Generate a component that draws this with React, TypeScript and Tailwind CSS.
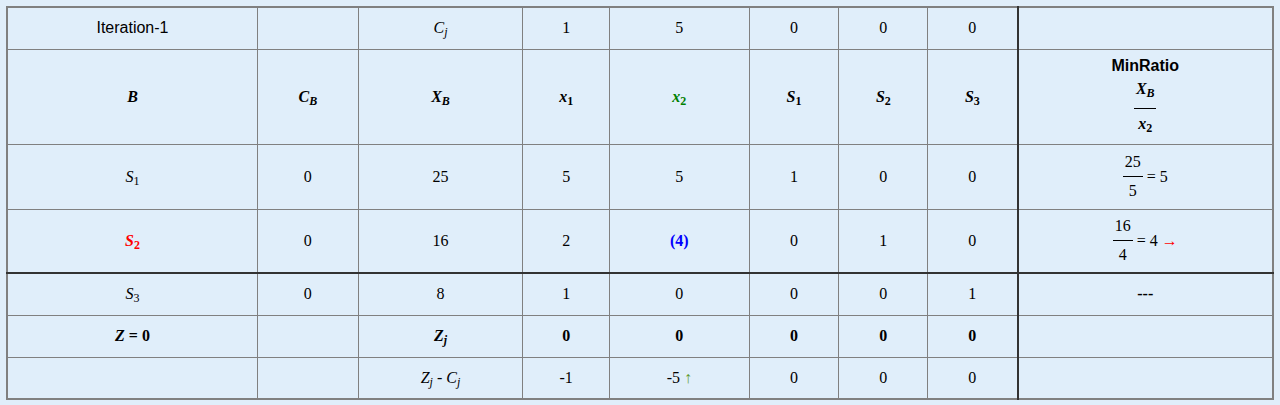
import React from 'react';

const serif = "font-['Times_New_Roman','Liberation_Serif',serif]";
const sans = "font-['Liberation_Sans',Arial,sans-serif]";

const cell = `border border-[#808080] text-center align-middle p-0 text-[16px] text-black ${serif}`;
const ratio = 'border-l-2 border-l-[#333333]';
const pivotRow = 'border-b-2 border-b-[#333333]';

const Sym: React.FC<{ b: string; s: string; bold?: boolean; subItalic?: boolean; color?: string }> = ({
  b,
  s,
  bold,
  subItalic,
  color,
}) => (
  <span className={`${serif} italic ${bold ? 'font-bold' : ''} ${color ?? ''}`}>
    {b}
    <sub className={`text-[12px] ${subItalic ? 'italic' : 'not-italic'}`}>{s}</sub>
  </span>
);

const Frac: React.FC<{
  top: React.ReactNode;
  bottom: React.ReactNode;
  w?: string;
  topCls?: string;
  botCls?: string;
}> = ({ top, bottom, w = 'w-[20px]', topCls = 'leading-[28px]', botCls = 'leading-[28px]' }) => (
  <span className="inline-flex flex-col items-center align-middle">
    <span className={topCls}>{top}</span>
    <span className={`${w} border-t border-black`} />
    <span className={botCls}>{bottom}</span>
  </span>
);

export default function App() {
  const widths = [251, 101, 165, 87, 140, 90, 89, 90, 256];

  return (
    <div className="min-h-[405px] w-[1280px] bg-[#e0eefa] p-[6px]">
      <table className={`border-collapse border-2 border-[#808080] bg-[#e0eefa] table-fixed ${serif}`}>
        <colgroup>
          {widths.map((w, i) => (
            <col key={i} style={{ width: w }} />
          ))}
        </colgroup>
        <tbody>
          <tr className="h-[42px]">
            <td className={`border border-[#808080] text-center align-middle p-0 text-[16px] text-black ${sans}`}>
              Iteration-1
            </td>
            <td className={cell}></td>
            <td className={cell}>
              <Sym b="C" s="j" subItalic />
            </td>
            <td className={cell}>1</td>
            <td className={cell}>5</td>
            <td className={cell}>0</td>
            <td className={cell}>0</td>
            <td className={cell}>0</td>
            <td className={`${cell} ${ratio}`}></td>
          </tr>

          <tr className="h-[95px]">
            <td className={cell}>
              <span className="font-bold italic">B</span>
            </td>
            <td className={cell}>
              <Sym b="C" s="B" bold subItalic />
            </td>
            <td className={cell}>
              <Sym b="X" s="B" bold subItalic />
            </td>
            <td className={cell}>
              <Sym b="x" s="1" bold />
            </td>
            <td className={cell}>
              <Sym b="x" s="2" bold color="text-[#008000]" />
            </td>
            <td className={cell}>
              <Sym b="S" s="1" bold />
            </td>
            <td className={cell}>
              <Sym b="S" s="2" bold />
            </td>
            <td className={cell}>
              <Sym b="S" s="3" bold />
            </td>
            <td className={`${cell} ${ratio}`}>
              <div className={`${sans} font-bold leading-[24px]`}>MinRatio</div>
              <Frac
                w="w-[22px]"
                topCls="leading-[22px] pb-[8px]"
                botCls="leading-[30px]"
                top={<Sym b="X" s="B" bold subItalic />}
                bottom={<Sym b="x" s="2" bold />}
              />
            </td>
          </tr>

          <tr className="h-[65px]">
            <td className={cell}>
              <Sym b="S" s="1" />
            </td>
            <td className={cell}>0</td>
            <td className={cell}>25</td>
            <td className={cell}>5</td>
            <td className={cell}>5</td>
            <td className={cell}>1</td>
            <td className={cell}>0</td>
            <td className={cell}>0</td>
            <td className={`${cell} ${ratio}`}>
              <Frac top="25" bottom="5" />
              <span className="align-middle"> = 5</span>
            </td>
          </tr>

          <tr className="h-[64px]">
            <td className={`${cell} ${pivotRow}`}>
              <Sym b="S" s="2" bold color="text-[#ff0000]" />
            </td>
            <td className={`${cell} ${pivotRow}`}>0</td>
            <td className={`${cell} ${pivotRow}`}>16</td>
            <td className={`${cell} ${pivotRow}`}>2</td>
            <td className={`${cell} ${pivotRow}`}>
              <span className="font-bold text-[#0000ff]">(4)</span>
            </td>
            <td className={`${cell} ${pivotRow}`}>0</td>
            <td className={`${cell} ${pivotRow}`}>1</td>
            <td className={`${cell} ${pivotRow}`}>0</td>
            <td className={`${cell} ${pivotRow} ${ratio}`}>
              <Frac top="16" bottom="4" />
              <span className="align-middle">
                {' '}
                = 4 <span className="font-sans text-[#ff0000] text-[16px]">→</span>
              </span>
            </td>
          </tr>

          <tr className="h-[42px]">
            <td className={cell}>
              <Sym b="S" s="3" />
            </td>
            <td className={cell}>0</td>
            <td className={cell}>8</td>
            <td className={cell}>1</td>
            <td className={cell}>0</td>
            <td className={cell}>0</td>
            <td className={cell}>0</td>
            <td className={cell}>1</td>
            <td className={`${cell} ${ratio}`}>
              <span className="font-bold">---</span>
            </td>
          </tr>

          <tr className="h-[42px]">
            <td className={cell}>
              <span className="font-bold">
                <span className="italic">Z</span> = 0
              </span>
            </td>
            <td className={cell}></td>
            <td className={cell}>
              <Sym b="Z" s="j" bold subItalic />
            </td>
            <td className={cell}>
              <b>0</b>
            </td>
            <td className={cell}>
              <b>0</b>
            </td>
            <td className={cell}>
              <b>0</b>
            </td>
            <td className={cell}>
              <b>0</b>
            </td>
            <td className={cell}>
              <b>0</b>
            </td>
            <td className={`${cell} ${ratio}`}></td>
          </tr>

          <tr className="h-[42px]">
            <td className={cell}></td>
            <td className={cell}></td>
            <td className={cell}>
              <Sym b="Z" s="j" subItalic /> - <Sym b="C" s="j" subItalic />
            </td>
            <td className={cell}>-1</td>
            <td className={cell}>
              -5&nbsp;<span className="font-sans text-[#5f9a2c] text-[16px]">↑</span>
            </td>
            <td className={cell}>0</td>
            <td className={cell}>0</td>
            <td className={cell}>0</td>
            <td className={`${cell} ${ratio}`}></td>
          </tr>
        </tbody>
      </table>
    </div>
  );
}
